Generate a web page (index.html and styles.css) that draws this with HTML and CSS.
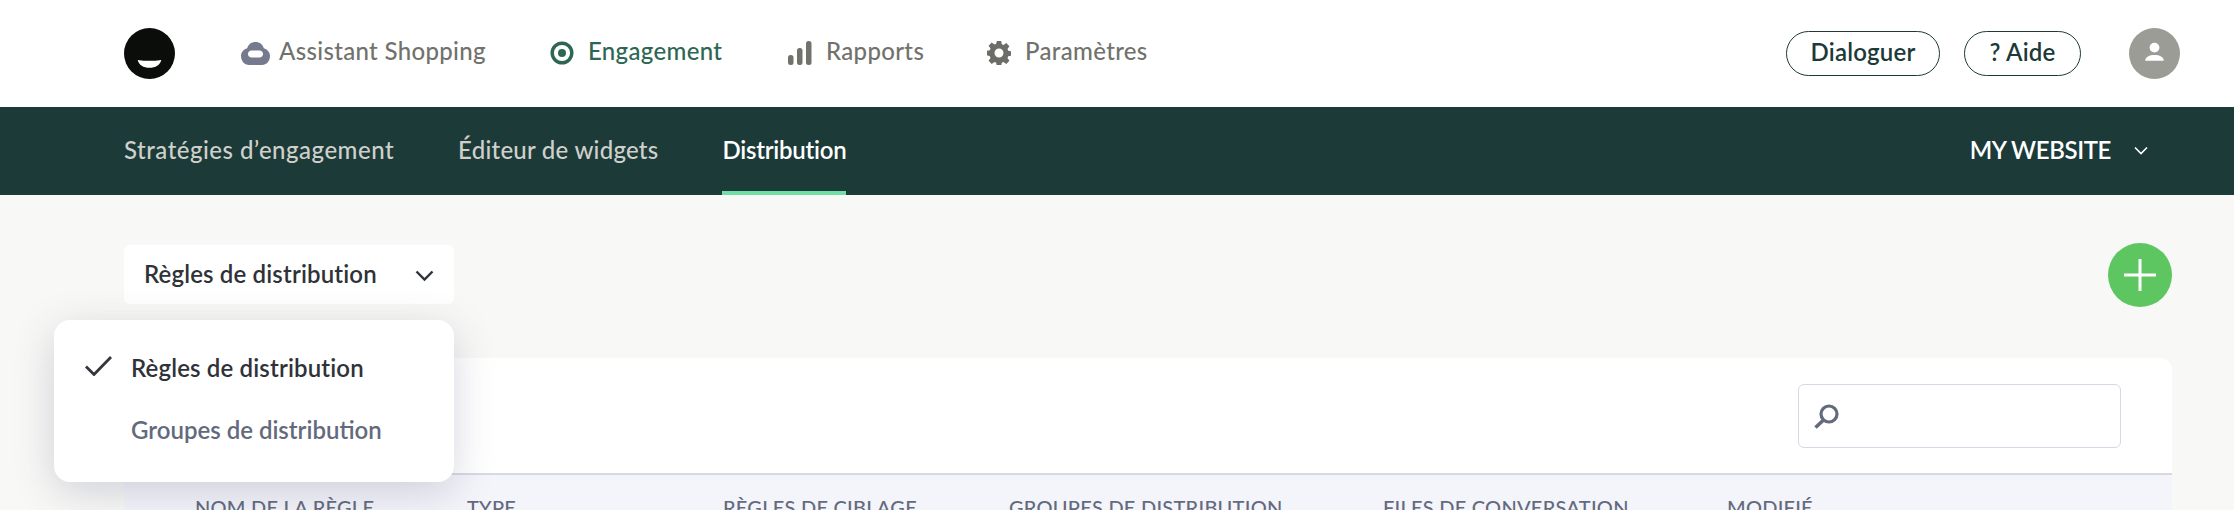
FILE: index.html
```html
<!DOCTYPE html>
<html lang="fr">

<head>
  <meta charset="UTF-8" />
  <meta name="viewport" content="width=device-width, initial-scale=1.0" />
  <title>Règles de distribution</title>
  <link rel="stylesheet" href="styles.css">
</head>

<body>
  <header class="topBar">
    <svg class="logo" viewBox="0 0 52 52">
      <circle cx="26" cy="26" r="26" fill="#0b0d0b" />
      <path d="M14 32.500q12 2 24 0c-1 5-6 8-12 8s-11-3-12-8z" fill="#fff" />
    </svg>
    <nav class="mainNav">
      <a class="mainLink shopping">
        <svg class="mainIcon" viewBox="0 0 29 23">
          <path fill-rule="evenodd" fill="#767a8e"
            d="M14.500 0c4 0 7 2 8.300 6.200 3.500 1 6.200 4 6.200 7.800 0 5-3.500 9-8 9H8c-4.500 0-8-4-8-9 0-3.800 2.700-6.800 6.200-7.800C7.500 2 10.500 0 14.500 0zM10.500 8.500C8.500 8.500 7 10 7 12s1.500 3.500 3.500 3.500h8c2 0 3.500-1.500 3.500-3.500s-1.500-3.500-3.500-3.500h-8z" />
        </svg>
        <span class="mainText">Assistant Shopping</span>
      </a>
      <a class="mainLink engagement">
        <svg class="mainIcon" viewBox="0 0 24 24">
          <circle cx="12" cy="12" r="9.800" fill="none" stroke="#2d6753" stroke-width="3.400" />
          <circle cx="12" cy="12" r="4" fill="#2d6753" />
        </svg>
        <span class="mainText">Engagement</span>
      </a>
      <a class="mainLink reports">
        <svg class="mainIcon" viewBox="0 0 24 24">
          <rect x="0" y="14" width="5.500" height="10" rx="2.500" fill="#72726c" />
          <rect x="9" y="7" width="5.500" height="17" rx="2.500" fill="#72726c" />
          <rect x="18" y="0" width="5.500" height="24" rx="2.500" fill="#72726c" />
        </svg>
        <span class="mainText">Rapports</span>
      </a>
      <a class="mainLink settings">
        <svg class="mainIcon" viewBox="0 0 24 24">
          <path fill-rule="evenodd" fill="#6d6d68"
            d="M9.800 0h4.400l.6 3.300 1.700.7 2.800-1.900 3.100 3.100-1.900 2.800.7 1.700 3.200.6v4.400l-3.200.6-.7 1.700 1.900 2.800-3.100 3.100-2.800-1.900-1.700.7-.6 3.300H9.800l-.6-3.300-1.700-.7-2.800 1.900-3.100-3.100 1.900-2.800-.7-1.700L0 14.200V9.800l2.800-.6.7-1.700-1.900-2.800 3.100-3.100 2.800 1.900 1.700-.7zM12 7.500a4.500 4.500 0 1 0 0 9 4.500 4.500 0 0 0 0-9z" />
        </svg>
        <span class="mainText">Paramètres</span>
      </a>
    </nav>
    <div class="topActions">
      <button class="pillBtn chatBtn">Dialoguer</button>
      <button class="pillBtn helpBtn">? Aide</button>
      <div class="avatar">
        <svg viewBox="0 0 52 52" class="avatarIcon">
          <circle cx="26" cy="20" r="5" fill="#fff" />
          <path d="M16.500 33.500c0-4 4.500-6 9.500-6s9.500 2 9.500 6z" fill="#fff" />
        </svg>
      </div>
    </div>
  </header>

  <div class="subBar">
    <nav class="subNav">
      <a class="subLink">Stratégies d’engagement</a>
      <a class="subLink widgets">Éditeur de widgets</a>
      <a class="subLink active">Distribution</a>
    </nav>
    <div class="siteSelect">
      MY WEBSITE
      <svg class="siteChevron" viewBox="0 0 14 9">
        <path d="M1 1.500l6 6 6-6" fill="none" stroke="#fff" stroke-width="1.600" />
      </svg>
    </div>
  </div>

  <main class="content">
    <div class="toolRow">
      <div class="viewSelect">
        <span class="viewText">Règles de distribution</span>
        <svg class="viewChevron" viewBox="0 0 19 12">
          <path d="M1.500 1.500l8 8 8-8" fill="none" stroke="#2f3238" stroke-width="2.400" />
        </svg>
      </div>
      <button class="addBtn">
        <svg viewBox="0 0 32 32" class="addIcon">
          <path d="M16 0v32M0 16h32" stroke="#fff" stroke-width="3" fill="none" />
        </svg>
      </button>
    </div>

    <section class="rulesCard">
      <div class="cardTop">
        <div class="searchBox">
          <svg class="searchIcon" viewBox="0 0 25 25">
            <circle cx="15" cy="10" r="8" fill="none" stroke="#646a7e" stroke-width="3.200" />
            <path d="M9.500 16L1.500 23.500" stroke="#646a7e" stroke-width="3.600" fill="none" />
          </svg>
        </div>
      </div>
      <div class="tableHead">
        <span>Nom de la règle</span>
        <span>Type</span>
        <span>Règles de ciblage</span>
        <span>Groupes de distribution</span>
        <span>Files de conversation</span>
        <span>Modifié</span>
      </div>
    </section>

    <ul class="dropMenu">
      <li class="dropItem selected">
        <svg class="checkIcon" viewBox="0 0 27 20">
          <path d="M1 10.500l8 8L26 1" fill="none" stroke="#33363c" stroke-width="2.800" />
        </svg>
        Règles de distribution
      </li>
      <li class="dropItem">Groupes de distribution</li>
    </ul>
  </main>
</body>

</html>
```

FILE: styles.css
```css
* {
  padding: 0;
  margin: 0;
  box-sizing: border-box;
}

html,
body {
  height: 100%;
  overflow: hidden;
}

body {
  background: #f8f8f6;
  font-family: "Lato", "Noto Sans", sans-serif;
  font-size: 24px;
}

.topBar {
  height: 107px;
  background: #ffffff;
  display: flex;
  align-items: center;
  padding: 0 54px 1px 124px;
}

.logo {
  width: 51px;
  height: 51px;
}

.mainNav {
  display: flex;
  align-items: center;
  margin-left: 66px;
  flex: 1;
}

.mainLink {
  display: flex;
  align-items: center;
  color: #72726c;
  font-weight: 500;
  white-space: nowrap;
}

.mainText {
  padding-bottom: 5px;
  letter-spacing: 0.33px;
}

.mainIcon {
  width: 24px;
  height: 24px;
  margin-right: 14px;
}

.shopping {
  width: 309px;
}

.shopping .mainIcon {
  width: 29px;
  height: 23px;
  margin-right: 9px;
}

.engagement {
  width: 238px;
  color: #2d6753;
}

.reports {
  width: 199px;
}

.pillBtn {
  height: 45px;
  padding: 0 0 3px;
  border: 1px solid #1c3a38;
  border-radius: 23px;
  background: #ffffff;
  color: #1c3a38;
  font-family: inherit;
  font-size: 24px;
  font-weight: 600;
  letter-spacing: 0.2px;
}

.topActions {
  display: flex;
  align-items: center;
}

.chatBtn {
  width: 154px;
  margin-right: 24px;
}

.helpBtn {
  width: 117px;
  margin-right: 48px;
}

.avatar {
  width: 51px;
  height: 51px;
  border-radius: 50%;
  background: #9c9c97;
}

.avatarIcon {
  display: block;
  width: 51px;
  height: 51px;
}

.subBar {
  height: 88px;
  background: #1c3a38;
  display: flex;
  justify-content: space-between;
  padding: 0 86px 0 124px;
}

.subNav {
  display: flex;
  gap: 64px;
}

.subLink {
  display: flex;
  align-items: center;
  color: #cfd0cb;
  font-weight: 500;
  letter-spacing: 0.5px;
  border-bottom: 4px solid transparent;
}

.subLink.widgets {
  letter-spacing: 0.25px;
}

.subLink.active {
  color: #ffffff;
  font-weight: 600;
  letter-spacing: -0.25px;
  border-bottom-color: #6fdfa6;
}

.siteSelect {
  display: flex;
  align-items: center;
  color: #ffffff;
  font-weight: 600;
  letter-spacing: -0.4px;
  padding-bottom: 4px;
}

.siteChevron {
  width: 14px;
  height: 9px;
  margin-left: 23px;
  margin-top: 3px;
}

.content {
  position: relative;
  padding: 48px 62px 0 124px;
}

.toolRow {
  display: flex;
  justify-content: space-between;
  align-items: flex-start;
  height: 115px;
}

.viewSelect {
  width: 330px;
  height: 59px;
  margin-top: 2px;
  padding: 0 20px;
  background: #ffffff;
  border-radius: 6px;
  display: flex;
  justify-content: space-between;
  align-items: center;
  color: #2f3238;
  font-weight: 600;
}

.viewText {
  padding-bottom: 2px;
  letter-spacing: 0.15px;
}

.viewChevron {
  width: 19px;
  height: 12px;
  margin-top: 2px;
}

.addBtn {
  width: 64px;
  height: 64px;
  border: none;
  border-radius: 50%;
  background: #5ec661;
  display: flex;
  justify-content: center;
  align-items: center;
}

.addIcon {
  width: 32px;
  height: 32px;
}

.rulesCard {
  background: #ffffff;
  border-radius: 12px 12px 0 0;
}

.cardTop {
  height: 115px;
  display: flex;
  justify-content: flex-end;
  padding: 26px 51px 0 0;
}

.searchBox {
  width: 323px;
  height: 64px;
  border: 1px solid #d8d8e4;
  border-radius: 6px;
  display: flex;
  align-items: center;
  padding: 0 0 0 15px;
}

.searchIcon {
  width: 25px;
  height: 25px;
}

.tableHead {
  display: grid;
  grid-template-columns: 272px 256px 286px 374px 344px 1fr;
  height: 200px;
  padding: 20px 0 0 71px;
  background: #f4f5fa;
  border-top: 2px solid #d8d8e4;
  color: #646a7e;
  font-size: 20px;
  font-weight: 500;
  letter-spacing: 0.25px;
  text-transform: uppercase;
  white-space: nowrap;
}

.dropMenu {
  position: absolute;
  left: 54px;
  top: 125px;
  width: 400px;
  height: 162px;
  padding: 16px 0 0 77px;
  background: #ffffff;
  border-radius: 16px;
  box-shadow: 0 10px 40px rgba(70, 75, 110, 0.22);
  list-style: none;
  color: #646a7e;
  font-weight: 600;
}

.dropItem {
  position: relative;
  height: 62px;
  display: flex;
  align-items: center;
}

.dropItem.selected {
  color: #2f3238;
  letter-spacing: 0.15px;
}

.checkIcon {
  position: absolute;
  left: -46px;
  top: 20px;
  width: 27px;
  height: 20px;
}
```
